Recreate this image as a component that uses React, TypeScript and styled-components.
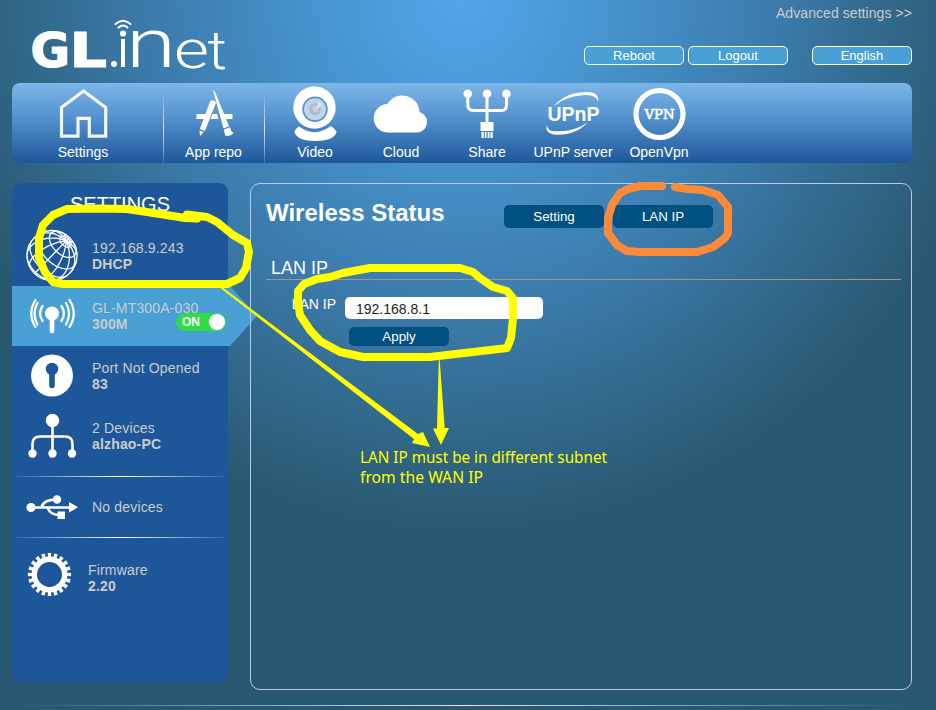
import React from 'react';
import styled, { createGlobalStyle } from 'styled-components';

const GlobalStyle = createGlobalStyle`
  * { box-sizing: border-box; }
  body {
    margin: 0;
    background: #295972;
    font-family: 'Liberation Sans', Arial, sans-serif;
    font-size: 14px;
    color: #fff;
    overflow: hidden;
  }
`;

const Page = styled.div`
  position: relative;
  width: 936px;
  height: 710px;
  padding: 0 24px 0 12px;
  overflow: hidden;
  background: radial-gradient(circle 530px at 462px 0, #50a6ea 0%, #4692cb 30%, #3b7aaa 60%, #32698c 80%, #295972 100%);
`;

const Header = styled.header`
  display: flex;
  justify-content: space-between;
  height: 83px;
`;

const Logo = styled.svg`
  width: 220px;
  height: 83px;
  fill: #fff;
`;

const HeaderTools = styled.div`
  display: flex;
  flex-direction: column;
  align-items: flex-end;
`;

const AdvancedLink = styled.a`
  height: 46px;
  padding-top: 5px;
  line-height: 16px;
  letter-spacing: 0.07px;
  color: #ccc;
`;

const HeaderButtons = styled.div`
  display: flex;
  gap: 4px;
`;

const HeaderButton = styled.button<{ $gap?: number }>`
  width: 100px;
  height: 19px;
  margin-left: ${(p) => p.$gap ?? 0}px;
  padding: 0;
  border: 1px solid #fff;
  border-radius: 5px;
  background: #48a0d5;
  color: #fff;
  font: 13px/17px 'Liberation Sans', Arial, sans-serif;
`;

const Nav = styled.nav`
  display: flex;
  height: 80px;
  border-radius: 8px;
  background: linear-gradient(#7db6e8, #5795d1 40%, #1e5799);
`;

const NavItem = styled.a<{ $width: number }>`
  display: flex;
  flex-direction: column;
  align-items: center;
  width: ${(p) => p.$width}px;
  padding-top: 2px;
  line-height: 18px;
  white-space: nowrap;
`;

const NavIcon = styled.svg`
  width: 60px;
  height: 58px;
  flex: none;
  fill: #fff;
`;

const NavDivider = styled.span<{ $before: number; $after: number }>`
  width: 1px;
  margin: 12px ${(p) => p.$after}px 0 ${(p) => p.$before}px;
  background: linear-gradient(rgba(255, 255, 255, 0.1), rgba(255, 255, 255, 0.8) 50%, rgba(255, 255, 255, 0.15));
`;

const Body = styled.div`
  display: flex;
  align-items: flex-start;
  gap: 22px;
  margin-top: 20px;
`;

const Sidebar = styled.aside`
  width: 216px;
  height: 500px;
  border-radius: 9px;
  background: #1e5799;
`;

const SidebarTitle = styled.h2`
  height: 43px;
  margin: 0;
  padding-top: 9px;
  font-size: 20px;
  font-weight: 400;
  line-height: 24px;
  text-align: center;
`;

const StatusRow = styled.div<{ $height?: number; $textX?: number; $active?: boolean }>`
  display: grid;
  grid-template-columns: ${(p) => p.$textX ?? 80}px 1fr;
  align-items: center;
  height: ${(p) => p.$height ?? 60}px;
  color: #ccc;
  line-height: 16px;
  ${(p) =>
    p.$active &&
    `
    width: 245px;
    background: #48a0d5;
    clip-path: polygon(0 0, 218px 0, 100% 30px, 218px 100%, 0 100%);
  `}
`;

const StatusIcon = styled.svg`
  width: 80px;
  height: 60px;
  fill: #fff;
`;

const StatusText = styled.div`
  position: relative;
  letter-spacing: 0.17px;
  white-space: nowrap;
`;

const StatusLine = styled.div``;

const StatusValue = styled.div`
  font-weight: 700;
`;

const Toggle = styled.div`
  position: absolute;
  top: 13px;
  left: 84px;
  display: flex;
  align-items: center;
  justify-content: space-between;
  width: 50px;
  height: 18px;
  padding: 0 1px 0 6px;
  border-radius: 9px;
  background: #2fdc45;
  color: #fff;
  font-size: 12px;
  font-weight: 700;
  letter-spacing: 0;
`;

const Knob = styled.span`
  width: 16px;
  height: 16px;
  border-radius: 50%;
  background: #fff;
`;

const SidebarDivider = styled.div<{ $top?: number }>`
  height: 1px;
  margin: ${(p) => p.$top ?? 0}px 4px 0;
  background: linear-gradient(90deg, rgba(255, 255, 255, 0.1), #fff, rgba(255, 255, 255, 0.1));
`;

const Panel = styled.main`
  position: relative;
  width: 662px;
  height: 507px;
  padding: 0 10px 0 15px;
  border: 1px solid #b9c9f0;
  border-radius: 10px;
`;

const PanelHeader = styled.div`
  display: flex;
  align-items: flex-start;
  height: 73px;
`;

const PanelTitle = styled.h1`
  width: 238px;
  margin: 15px 0 0;
  font-size: 24px;
  line-height: 28px;
`;

const ActionButton = styled.button<{ $height: number }>`
  width: 100px;
  height: ${(p) => p.$height}px;
  padding: 0;
  border: 0;
  border-radius: 5px;
  background: #005080;
  color: #fff;
  font: 13.33px 'Liberation Sans', Arial, sans-serif;
`;

const TabButtons = styled.div`
  display: flex;
  gap: 9px;
  margin-top: 21px;
`;

const SectionTitle = styled.h3`
  height: 23px;
  margin: 0;
  padding-left: 5px;
  border-bottom: 1px solid #a8938b;
  font-size: 18px;
  font-weight: 400;
  line-height: 22px;
`;

const Form = styled.form`
  display: grid;
  grid-template-columns: 79px 198px;
  row-gap: 8px;
  margin-top: 17px;
`;

const FieldLabel = styled.label`
  padding-right: 9px;
  line-height: 15px;
  text-align: right;
`;

const Field = styled.input`
  width: 198px;
  height: 22px;
  padding: 1px 11px 0;
  border: 0;
  border-radius: 5px;
  background: #fff;
  color: #222;
  font: 14px 'Liberation Sans', Arial, sans-serif;
`;

const FormActions = styled.div`
  grid-column: 2;
  padding-left: 4px;
`;

const FooterLine = styled.div`
  height: 1px;
  margin: 15px 0 0;
  background: linear-gradient(90deg, rgba(255, 255, 255, 0), rgba(255, 255, 255, 0.85), rgba(255, 255, 255, 0));
`;

const Annotations = styled.svg`
  position: absolute;
  inset: 0;
  width: 936px;
  height: 710px;
  pointer-events: none;
`;

/* Orthographic wire globe whose pole leans toward the upper right. */
const globePaths = (cx: number, cy: number, r: number): string[] => {
  const n = [0.56, -0.58, 0.59];
  const len = Math.hypot(n[1], n[0]);
  const u = [-n[1] / len, n[0] / len, 0];
  const v = [n[1] * u[2] - n[2] * u[1], n[2] * u[0] - n[0] * u[2], n[0] * u[1] - n[1] * u[0]];
  const trace = (at: (t: number) => [number, number], steps: number) => {
    let d = '';
    let pen = false;
    for (let i = 0; i <= steps; i++) {
      const [lat, lon] = at(i / steps);
      const p = [0, 1, 2].map(
        (k) => Math.sin(lat) * n[k] + Math.cos(lat) * (Math.cos(lon) * u[k] + Math.sin(lon) * v[k]),
      );
      if (p[2] < 0) {
        pen = false;
        continue;
      }
      d += `${pen ? 'L' : 'M'}${(cx + p[0] * r).toFixed(2)} ${(cy + p[1] * r).toFixed(2)}`;
      pen = true;
    }
    return d;
  };
  const lines: string[] = [];
  for (let a = 0; a < 360; a += 30) {
    lines.push(trace((t) => [Math.PI / 2 - t * Math.PI, (a * Math.PI) / 180], 50));
  }
  [74, 50, 22, -6, -34].forEach((lat) => {
    lines.push(trace((t) => [(lat * Math.PI) / 180, t * 2 * Math.PI], 90));
  });
  return lines;
};

const Brand = () => (
  <Logo viewBox="12 0 220 83" role="img" aria-label="GL.iNet">
    <g fontFamily="'DejaVu Sans'" fontWeight="700" stroke="#fff" strokeWidth="1.2" strokeLinejoin="round">
      <text x="30.5" y="66.500" fontSize="47.500" textLength="39.500" lengthAdjust="spacingAndGlyphs">G</text>
      <text x="69.500" y="66.500" fontSize="48" textLength="37.500" lengthAdjust="spacingAndGlyphs">L</text>
    </g>
    <circle cx="114" cy="64" r="3" />
    <circle cx="123" cy="33.500" r="3.100" />
    <rect x="121" y="39" width="4" height="28" />
    <path d="M118.500 27.500Q123 23.500 127.500 27.500M115.500 24Q123 17.500 130.500 24" fill="none" stroke="#fff" strokeWidth="2" strokeLinecap="round" />
    <g fontFamily="Roboto" fontWeight="300">
      <text x="126" y="67" fontSize="69" textLength="50" lengthAdjust="spacingAndGlyphs">n</text>
      <text x="174" y="68" fontSize="51" textLength="35" lengthAdjust="spacingAndGlyphs">e</text>
      <text x="207.500" y="68.500" fontSize="54" textLength="19.500" lengthAdjust="spacingAndGlyphs">t</text>
    </g>
  </Logo>
);

const HouseIcon = () => (
  <NavIcon viewBox="53 85 60 58">
    <path d="M61.500 136.200V107.500L83.500 91L105.700 107.500V136.200H89.300V118.300H78V136.200Z" fill="none" stroke="#f5f5f5" strokeWidth="3.200" />
  </NavIcon>
);

const RepoIcon = () => (
  <NavIcon viewBox="183.500 85 60 58">
    <path d="M196 114H205.500L203.500 119H196ZM212 114H216.500L218 119H210ZM223 114H232V119H225Z" />
    <path d="M209.800 101Q213 99 215.500 102.500L204.500 131L199.300 129ZM199 130.500L203.300 132L199.500 136Z" />
    <path d="M212.300 89.500L214.500 92L228.600 126.200L223 128.500ZM223.500 129.500L229.500 127.300Q230 131 233 133.300Q228.500 137.500 224.500 135.200Z" />
  </NavIcon>
);

const CameraIcon = () => (
  <NavIcon viewBox="285 85 60 58">
    <path d="M299 126.500Q314.500 138 331 126Q336.500 130 336.500 132.500Q333 141 315 141Q298 141 294.500 132.500Q295 129 299 126.500Z" />
    <circle cx="314.500" cy="107.500" r="21.200" />
    <circle cx="315" cy="109.200" r="12.700" fill="#5d91c8" />
    <circle cx="315" cy="109.200" r="11" fill="#bed5ee" />
    <circle cx="315" cy="109" r="6" fill="#a9bdd0" />
    <circle cx="315.500" cy="109" r="3.200" fill="#c8d0d6" />
    <path d="M315.500 109L319 102L323 106Z" fill="#d6e5f4" />
  </NavIcon>
);

const CloudIcon = () => (
  <NavIcon viewBox="370 85 60 58">
    <path d="M387.500 132.500A14 14 0 0 1 386.500 104A17.200 17.200 0 0 1 418.500 112A10.500 10.500 0 0 1 417 132.500Z" />
  </NavIcon>
);

const ShareIcon = () => (
  <NavIcon viewBox="456.500 85 60 58">
    <circle cx="467.300" cy="93.800" r="4.300" />
    <circle cx="486.500" cy="93.800" r="4.300" />
    <circle cx="506" cy="93.800" r="4.300" />
    <path d="M467.300 94V105Q467.300 110.500 473 110.500H501Q506 110.500 506 105V94M486.500 94V123" fill="none" stroke="#fff" strokeWidth="3" />
    <path d="M480 122H493V131H480ZM481 132H483.200V138H481ZM484.300 132H486V138H484.300ZM487.200 132H489V138H487.200ZM490 132H492.200V138H490Z" />
  </NavIcon>
);

const UpnpIcon = () => (
  <NavIcon viewBox="543 85 60 58">
    <text x="547.500" y="121" fontFamily="'Liberation Sans'" fontWeight="700" fontSize="20" textLength="52" lengthAdjust="spacingAndGlyphs">UPnP</text>
    <path d="M554 106Q566 92 586 92Q600 91.500 598 103Q598 95 585 95Q567 95.500 554 106ZM547 124.500Q546 131.500 558 131.300Q576 131 587.500 122.500Q577 134.500 557 134.800Q544 134 547 124.500Z" />
  </NavIcon>
);

const VpnIcon = () => (
  <NavIcon viewBox="629 85 60 58">
    <circle cx="659.500" cy="114" r="23.500" fill="none" stroke="#fff" strokeWidth="5.200" />
    <text x="644.500" y="118.800" fontFamily="'DejaVu Serif'" fontSize="13.300" stroke="#fff" strokeWidth=".7" textLength="30" lengthAdjust="spacingAndGlyphs">VPN</text>
  </NavIcon>
);

const GlobeIcon = () => (
  <StatusIcon viewBox="12 226 80 60">
    <g fill="none" stroke="#fff" strokeWidth="1.300">
      <circle cx="52" cy="255.500" r="25" />
      {globePaths(52, 255.5, 25).map((d, i) => (
        <path key={i} d={d} />
      ))}
    </g>
  </StatusIcon>
);

const AntennaIcon = () => (
  <StatusIcon viewBox="12 286 80 60">
    <circle cx="52" cy="313.500" r="7" />
    <path d="M52 315V331" stroke="#fff" strokeWidth="4.600" strokeLinecap="round" />
    <path
      d="M42.500 306Q37.500 313.500 42.500 321M37.500 303Q31.500 313.500 37.500 324.500M35.500 300Q27 313.500 35.500 327M61.500 306Q66.500 313.500 61.500 321M66 303Q72 313.500 66 324.500M69.500 300Q78 313.500 69.500 327"
      fill="none"
      stroke="#fff"
      strokeWidth="2.300"
      strokeLinecap="round"
    />
  </StatusIcon>
);

const KeyholeIcon = () => (
  <StatusIcon viewBox="12 346 80 60">
    <circle cx="52" cy="375.500" r="21" />
    <circle cx="52" cy="369" r="6.200" fill="#1e5799" />
    <path d="M52 370V385.500" stroke="#1e5799" strokeWidth="5.600" strokeLinecap="round" />
  </StatusIcon>
);

const TreeIcon = () => (
  <StatusIcon viewBox="12 406 80 60">
    <circle cx="52.500" cy="420.500" r="6.700" />
    <circle cx="32.500" cy="453.500" r="4.200" />
    <circle cx="52.500" cy="453.500" r="4.200" />
    <circle cx="72" cy="453.500" r="4.200" />
    <path d="M52.500 422V452M32.500 453V444Q32.500 436.500 40 436.500H65Q72.500 436.500 72.500 444V453" fill="none" stroke="#fff" strokeWidth="2.600" />
  </StatusIcon>
);

const UsbIcon = () => (
  <StatusIcon viewBox="12 477 80 60">
    <circle cx="31" cy="507.500" r="4.600" />
    <circle cx="57" cy="499.500" r="4.200" />
    <path d="M69 502L78 507.300L69 512.500ZM57.500 511.500H65V519H57.500Z" />
    <path d="M31 507.500H70M41.500 507Q43.500 499.500 57 499.500M47.500 507.500Q50 515 60 515" fill="none" stroke="#fff" strokeWidth="2.500" />
  </StatusIcon>
);

const GearIcon = () => (
  <StatusIcon viewBox="12 548 80 60">
    <circle cx="49.500" cy="574.500" r="15.200" fill="none" stroke="#fff" strokeWidth="5.400" />
    <circle cx="49.500" cy="574.500" r="19.400" fill="none" stroke="#fff" strokeWidth="4.400" pathLength={200} strokeDasharray="5.600 4.400" strokeDashoffset="2.800" />
  </StatusIcon>
);

export default function App() {
  return (
    <>
      <GlobalStyle />
      <Page>
        <Header>
          <Brand />
          <HeaderTools>
            <AdvancedLink>Advanced settings &gt;&gt;</AdvancedLink>
            <HeaderButtons>
              <HeaderButton>Reboot</HeaderButton>
              <HeaderButton>Logout</HeaderButton>
              <HeaderButton $gap={20}>English</HeaderButton>
            </HeaderButtons>
          </HeaderTools>
        </Header>

        <Nav>
          <NavItem $width={142}><HouseIcon />Settings</NavItem>
          <NavDivider $before={9} $after={9} />
          <NavItem $width={81}><RepoIcon />App repo</NavItem>
          <NavDivider $before={10} $after={7} />
          <NavItem $width={86}><CameraIcon />Video</NavItem>
          <NavItem $width={86}><CloudIcon />Cloud</NavItem>
          <NavItem $width={86}><ShareIcon />Share</NavItem>
          <NavItem $width={86}><UpnpIcon />UPnP server</NavItem>
          <NavItem $width={86}><VpnIcon />OpenVpn</NavItem>
        </Nav>

        <Body>
          <Sidebar>
            <SidebarTitle>SETTINGS</SidebarTitle>
            <StatusRow>
              <GlobeIcon />
              <StatusText>
                <StatusLine>192.168.9.243</StatusLine>
                <StatusValue>DHCP</StatusValue>
              </StatusText>
            </StatusRow>
            <StatusRow $active>
              <AntennaIcon />
              <StatusText>
                <StatusLine>GL-MT300A-030</StatusLine>
                <StatusValue>300M</StatusValue>
                <Toggle>ON<Knob /></Toggle>
              </StatusText>
            </StatusRow>
            <StatusRow>
              <KeyholeIcon />
              <StatusText>
                <StatusLine>Port Not Opened</StatusLine>
                <StatusValue>83</StatusValue>
              </StatusText>
            </StatusRow>
            <StatusRow>
              <TreeIcon />
              <StatusText>
                <StatusLine>2 Devices</StatusLine>
                <StatusValue>alzhao-PC</StatusValue>
              </StatusText>
            </StatusRow>
            <SidebarDivider $top={10} />
            <StatusRow>
              <UsbIcon />
              <StatusText>
                <StatusLine>No devices</StatusLine>
              </StatusText>
            </StatusRow>
            <SidebarDivider />
            <StatusRow $height={80} $textX={76}>
              <GearIcon />
              <StatusText>
                <StatusLine>Firmware</StatusLine>
                <StatusValue>2.20</StatusValue>
              </StatusText>
            </StatusRow>
          </Sidebar>

          <Panel>
            <PanelHeader>
              <PanelTitle>Wireless Status</PanelTitle>
              <TabButtons>
                <ActionButton $height={23}>Setting</ActionButton>
                <ActionButton $height={23}>LAN IP</ActionButton>
              </TabButtons>
            </PanelHeader>
            <SectionTitle>LAN IP</SectionTitle>
            <Form>
              <FieldLabel htmlFor="lan-ip">LAN IP</FieldLabel>
              <Field id="lan-ip" defaultValue="192.168.8.1" />
              <FormActions>
                <ActionButton type="button" $height={19}>Apply</ActionButton>
              </FormActions>
            </Form>
          </Panel>
        </Body>
        <FooterLine />

        <Annotations viewBox="0 0 936 710">
          <g fill="none" strokeWidth="8" strokeLinecap="round" strokeLinejoin="round">
            <path
              stroke="#ff0"
              d="M197 218.500L185 218L147 212L127 209L100 208.500L67 209L53 215L43 225L39 238L39 258L45 272L53 282L63 284H227L240 278L246 268L249 252L247 243L233 235L217 222L207 217L187 214.500L197 218.500"
            />
            <path
              stroke="#ff0"
              d="M298 291L304 284L317 279L330 277L343 273L370 268H460L473 272L480 278L493 287L507 291L513 298L513 318L511 338L507 348L473 352L430 357H363L340 352L320 341L310 330L300 315L298 302Z"
            />
            <path
              stroke="#fc8a38"
              d="M662 186H640L628 189L620 193L612 205L608 218V233L617 245L627 251L640 252H697L713 247L725 238L728 233V207L718 195L703 190L687 189L675 187"
            />
          </g>
          <path d="M219 287L222 287L418 434L423 432L430 447L412 443L414 439ZM438.800 359H439.600L444.700 428H449L441 445L433 428.500H437Z" fill="#ff0" />
          <g fill="#ff0" fontFamily="'Noto Sans'" fontSize="15.500">
            <text x="360" y="463" textLength="247" lengthAdjust="spacingAndGlyphs">LAN IP must be in different subnet</text>
            <text x="360" y="483" textLength="123" lengthAdjust="spacingAndGlyphs">from the WAN IP</text>
          </g>
        </Annotations>
      </Page>
    </>
  );
}
